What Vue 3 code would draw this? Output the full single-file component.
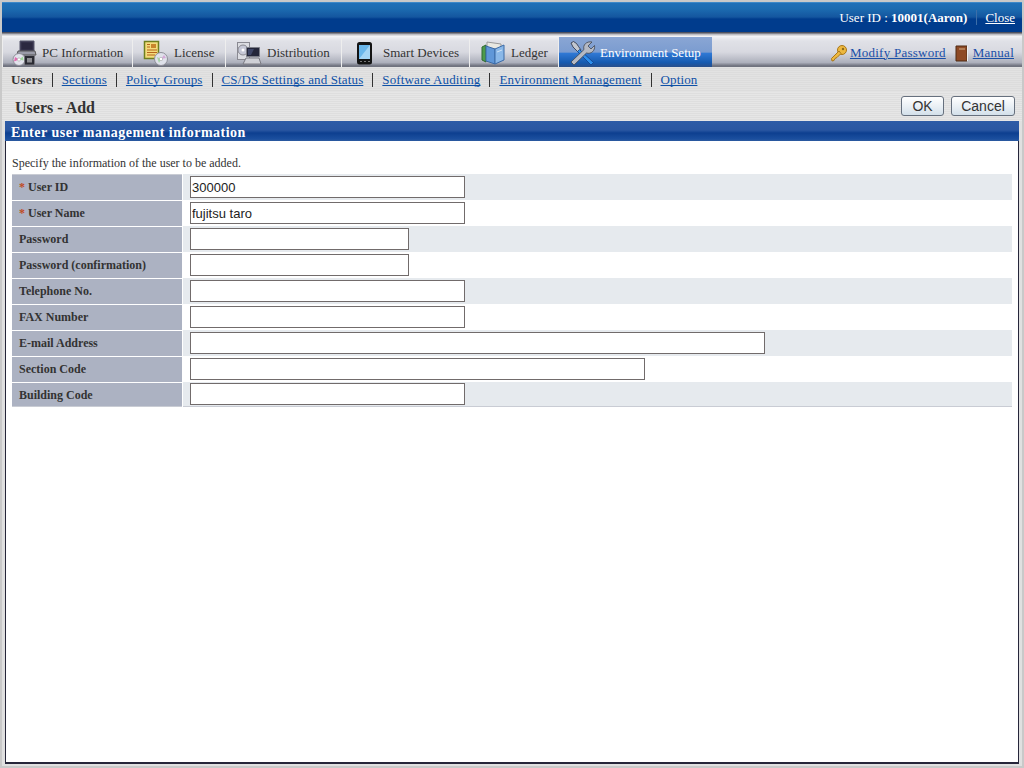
<script setup>
const tabs = [
  { label: 'PC Information', w: 131, icon: 'pc' },
  { label: 'License', w: 93, icon: 'license' },
  { label: 'Distribution', w: 116, icon: 'dist' },
  { label: 'Smart Devices', w: 128, icon: 'phone' },
  { label: 'Ledger', w: 89, icon: 'ledger' },
  { label: 'Environment Setup', w: 153, icon: 'tools', active: true },
]
const subs = ['Sections', 'Policy Groups', 'CS/DS Settings and Status', 'Software Auditing', 'Environment Management', 'Option']
const rows = [
  { label: 'User ID', req: true, value: '300000', w: 275 },
  { label: 'User Name', req: true, value: 'fujitsu taro', w: 275 },
  { label: 'Password', value: '', w: 219 },
  { label: 'Password (confirmation)', value: '', w: 219 },
  { label: 'Telephone No.', value: '', w: 275 },
  { label: 'FAX Number', value: '', w: 275 },
  { label: 'E-mail Address', value: '', w: 575 },
  { label: 'Section Code', value: '', w: 455 },
  { label: 'Building Code', value: '', w: 275 },
]
</script>

<template>
  <div class="page">
    <header class="top">
      <span>User ID : <b>10001(Aaron)</b></span>
      <i class="top-sep"></i>
      <a class="close">Close</a>
    </header>
    <div class="top-line"></div>

    <nav class="tabs">
      <div v-for="t in tabs" :key="t.label" class="tab" :class="{ active: t.active }" :style="{ width: t.w + 'px' }">
        <svg class="tab-icon" viewBox="0 0 30 26" width="30" height="26">
          <g v-if="t.icon === 'pc'">
            <path d="M12 1h14v10H12z" fill="#3a3750" stroke="#55556a" />
            <path d="M13.500 2.500h11v7h-11z" fill="#2b2840" />
            <path d="M10 11h17l1 4H9z" fill="#9a9ba8" stroke="#555" />
            <circle cx="11" cy="19.500" r="6" fill="#e2e3ec" stroke="#8f8f98" />
            <path d="M7 17l4 2.500-5 2z" fill="#e06cb0" />
            <path d="M11 19.500l4-3 .5 4z" fill="#9fd89a" />
            <circle cx="11" cy="19.500" r="1.600" fill="#fff" stroke="#999" stroke-width=".5" />
            <rect x="16.500" y="15.500" width="10" height="9.500" fill="#2b2b33" stroke="#77777f" />
            <rect x="19" y="18" width="5" height="4.500" fill="#8d8d92" />
          </g>
          <g v-else-if="t.icon === 'license'">
            <rect x="4.500" y="1.500" width="14" height="17" fill="#f3dc7c" stroke="#6f7f1e" stroke-width="1.500" />
            <rect x="11" y="4" width="5" height="4" fill="#c9852c" />
            <path d="M7 4.500h3M7 7h3M7 10h10M7 12.500h10M7 15h8" stroke="#b5651d" />
            <circle cx="21" cy="19" r="6.500" fill="#dfe1ea" stroke="#8f8f98" />
            <path d="M17 17l4 2-2 4z" fill="#a5d6a5" />
            <path d="M21 19l3-4 2 3z" fill="#d5a8d8" />
            <circle cx="21" cy="19" r="1.700" fill="#fff" stroke="#999" stroke-width=".5" />
          </g>
          <g v-else-if="t.icon === 'dist'">
            <rect x="4.500" y="2.500" width="12" height="17" fill="#dcdde2" stroke="#8a8a92" />
            <circle cx="10" cy="10" r="5" fill="#c6c8d6" stroke="#8a8a92" />
            <circle cx="10" cy="10" r="1.500" fill="#fff" />
            <path d="M13.500 7.500h13v9h-13z" fill="#24263a" stroke="#7c7e88" />
            <path d="M15 9h6l-3 6h-3z" fill="#3f4666" />
            <path d="M10 24l3-6h13l2 6z" fill="#cfd0d6" stroke="#7a7a82" />
          </g>
          <g v-else-if="t.icon === 'phone'">
            <rect x="8" y="2" width="15" height="22.500" rx="2.500" fill="#141414" />
            <rect x="10" y="5" width="11" height="14" fill="#6ab6ea" />
            <path d="M10 19l11-14v14z" fill="#d4ecfb" opacity=".55" />
            <path d="M11 21.500h2M15 21.500h2M19 21.500h2" stroke="#777" />
          </g>
          <g v-else-if="t.icon === 'ledger'">
            <path d="M5 7l4-2v17l-4-2z" fill="#4d9a4a" stroke="#2f6a30" />
            <path d="M10 2l14 2v6L10 8z" fill="#e8e8e2" stroke="#9a9a9a" />
            <path d="M9 6l9 3v15l-9-3z" fill="#5f97d8" stroke="#3b6aa6" />
            <path d="M18 9l9-4v15l-9 4z" fill="#8ab8e8" stroke="#3b6aa6" />
            <path d="M20 12l5-2" stroke="#cfe3f6" />
          </g>
          <g v-else>
            <path d="M5 3l2.500-1.500 3 2 2 3L15 10l-2.500 2.500L9 9 7 7z" fill="#c3c7cf" stroke="#2a2f40" stroke-width=".8" />
            <path d="M13.500 9.500l14 13-2.500 2.500-13.500-13.500z" fill="#2e8fec" stroke="#123f88" stroke-width=".8" />
            <path d="M5 22L18 9.500c-1.500-4.500 2.500-8.500 8-7.500l-4 4 3 3 3.500-3.500c1 5-3.500 9-8 7.500L8 25z" fill="#b5b9c3" stroke="#3f4552" stroke-width=".8" />
          </g>
        </svg>
        <span>{{ t.label }}</span>
      </div>
      <div class="tab-links">
        <svg viewBox="0 0 18 18" width="18" height="18"><circle cx="12" cy="6" r="4.500" fill="#edb83f" stroke="#a9771a" /><circle cx="13" cy="5" r="1.200" fill="#8a6a1c" /><path d="M9 7l-7.500 7.500L2 17l2-.5 1-2 2-1 4-4z" fill="#edb83f" stroke="#a9771a" /></svg>
        <a>Modify Password</a>
        <svg class="book" viewBox="0 0 14 18" width="14" height="18"><path d="M1 2h11v15H1z" fill="#8e4a25" stroke="#4f2a15" /><path d="M4 5h6" stroke="#d4b08a" /><path d="M12 2h1v15h-1z" fill="#eee" /></svg>
        <a>Manual</a>
      </div>
    </nav>

    <div class="subnav">
      <b>Users</b>
      <a v-for="s in subs" :key="s">{{ s }}</a>
    </div>

    <div class="title-row">
      <h1>Users - Add</h1>
      <div class="btns">
        <button class="ok">OK</button>
        <button class="cancel">Cancel</button>
      </div>
    </div>

    <main class="panel">
      <h2>Enter user management information</h2>
      <div class="body">
        <p>Specify the information of the user to be added.</p>
        <div class="table">
          <div v-for="r in rows" :key="r.label" class="row">
            <div class="lab"><span v-if="r.req" class="req">* </span>{{ r.label }}</div>
            <div class="val"><input :value="r.value" :style="{ width: r.w + 'px' }" /></div>
          </div>
        </div>
      </div>
    </main>
  </div>
</template>

<style>
html, body { margin: 0; overflow: hidden; }
</style>

<style scoped>
.page {
  width: 1024px;
  height: 768px;
  box-sizing: border-box;
  padding: 2px;
  display: flex;
  flex-direction: column;
  background: #c9c9c9;
  font: 12px "Liberation Serif", serif;
  color: #333;
  overflow: hidden;
}
.top {
  height: 30px;
  flex: none;
  display: flex;
  align-items: center;
  justify-content: flex-end;
  padding: 1px 7px 0 0;
  box-sizing: border-box;
  font-size: 13px;
  color: #fff;
  background: linear-gradient(#5aa0d8 0, #1f70b8 1px, #1c6bb0 7px, #14569f 15px, #003c8d 17px, #003c8d 100%);
}
.top-sep { width: 1px; height: 15px; background: #3d6ea8; margin: 0 8px 0 9px; }
.close { color: #fff; text-decoration: underline; }
.top-line {
  height: 5px;
  flex: none;
  background: linear-gradient(#4f5260 0, #4f5260 1px, #b9bac0 2px, #c4c4c8 3px, #f4f4f6 4px);
}
.tabs {
  height: 30px;
  flex: none;
  display: flex;
  background: linear-gradient(#f0f1f4 0, #e0e1e7 4px, #d8d9e0 50%, #adb0bc 85%, #70737f 96%);
}
.tab {
  height: 30px;
  box-sizing: border-box;
  flex: none;
  display: flex;
  align-items: center;
  padding: 1px 0 0 7px;
  border-right: 1px solid #eee;
  background: linear-gradient(#f0f1f4 0, #e0e1e7 4px, #d8d9e0 50%, #adb0bc 85%, #70737f 96%);
  color: #333;
  font-size: 13px;
  white-space: nowrap;
  gap: 4px;
}
.tab:first-child { border-left: 1px solid #eee; padding-left: 5px; }
.tab.active {
  color: #fff;
  border-right: 0;
  background: linear-gradient(#8aa6d4 0, #7b9cd0 50%, #2f78d4 55%, #175bb0 85%, #2a4f8a 100%);
}
.tab-icon { flex: none; }
.tab-links {
  margin-left: auto;
  display: flex;
  align-items: center;
  padding: 1px 8px 0 0;
  font-size: 13px;
  letter-spacing: .25px;
}
.tab-links a { color: #1a4fa8; text-decoration: underline; }
.tab-links svg { margin-right: 2px; }
.tab-links .book { margin: 0 4px 0 9px; }
.subnav {
  height: 25px;
  flex: none;
  display: flex;
  align-items: center;
  padding: 1px 0 0 9px;
  box-sizing: border-box;
  font-size: 13px;
  letter-spacing: .14px;
  background: repeating-linear-gradient(#e2e2e2 0, #e2e2e2 1px, #dcdcdc 1px, #dcdcdc 2px);
}
.subnav a {
  color: #0e51a7;
  text-decoration: underline;
  text-decoration-skip-ink: none;
  border-left: 1px solid #333;
  padding-left: 9px;
  margin-left: 9px;
  line-height: 14px;
}
.title-row {
  height: 29px;
  flex: none;
  display: flex;
  align-items: center;
  justify-content: space-between;
  padding: 0 7px 0 13px;
  background: repeating-linear-gradient(#e6e6e6 0, #e6e6e6 1px, #dedede 1px, #dedede 2px);
}
h1 { margin: 0; font-size: 16px; font-weight: bold; color: #333; padding-top: 2px; }
.btns { display: flex; gap: 7px; margin-top: -2px; }
button {
  height: 20px;
  padding: 0;
  border: 1px solid #66707e;
  border-radius: 3px;
  background: linear-gradient(#fff, #e6edf3 60%, #d3e0ea);
  font: 14px "Liberation Sans", sans-serif;
  color: #333;
}
.ok { width: 43px; }
.cancel { width: 64px; }
.panel {
  flex: 1;
  min-height: 0;
  padding: 0 3px 2px;
  display: flex;
  flex-direction: column;
  background: #e0e0e0;
}
h2 {
  margin: 0;
  height: 20px;
  flex: none;
  box-sizing: border-box;
  padding: 3px 0 0 6px;
  font-size: 14px;
  letter-spacing: .5px;
  line-height: 17px;
  color: #fff;
  background: linear-gradient(#2d5ba6 0, #2a57a2 45%, #0d3f90 60%, #1b4f9f 90%, #2d5a9f 100%);
}
.body {
  flex: 1;
  background: #fff;
  border: solid #26263a;
  border-width: 0 1px 2px 1px;
  padding: 0 5px 0 6px;
}
p { margin: 0; padding-top: 14px; height: 18px; line-height: 16px; font-size: 12px; color: #333; }
.table { margin-top: 1px; width: 1000px; display: flex; flex-direction: column; }
.row { height: 26px; display: flex; }
.row:last-child { height: 25px; }
.lab {
  width: 170px;
  border-top: 1px solid #fff;
  box-sizing: border-box;
  padding: 0 0 0 7px;
  background: #acb2c2;
  font-weight: bold;
  line-height: 24px;
  color: #333;
}
.row:first-child .lab { border-top-color: #c9ccd4; }
.row:last-child .lab { border-bottom: 1px solid #c9ccd4; }
.req { color: #c0491d; }
.val {
  flex: 1;
  margin-left: 1px;
  padding-left: 7px;
  box-sizing: border-box;
  display: flex;
  align-items: center;
}
.row:nth-child(odd) .val { background: #e6eaee; }
.row:last-child .val { border-bottom: 1px solid #c9ccd4; }
input {
  height: 22px;
  box-sizing: border-box;
  padding: 1px;
  border: 1px solid #716b6b;
  background: #fff;
  font: 13px "Liberation Sans", sans-serif;
  color: #222;
  outline: none;
}
</style>
